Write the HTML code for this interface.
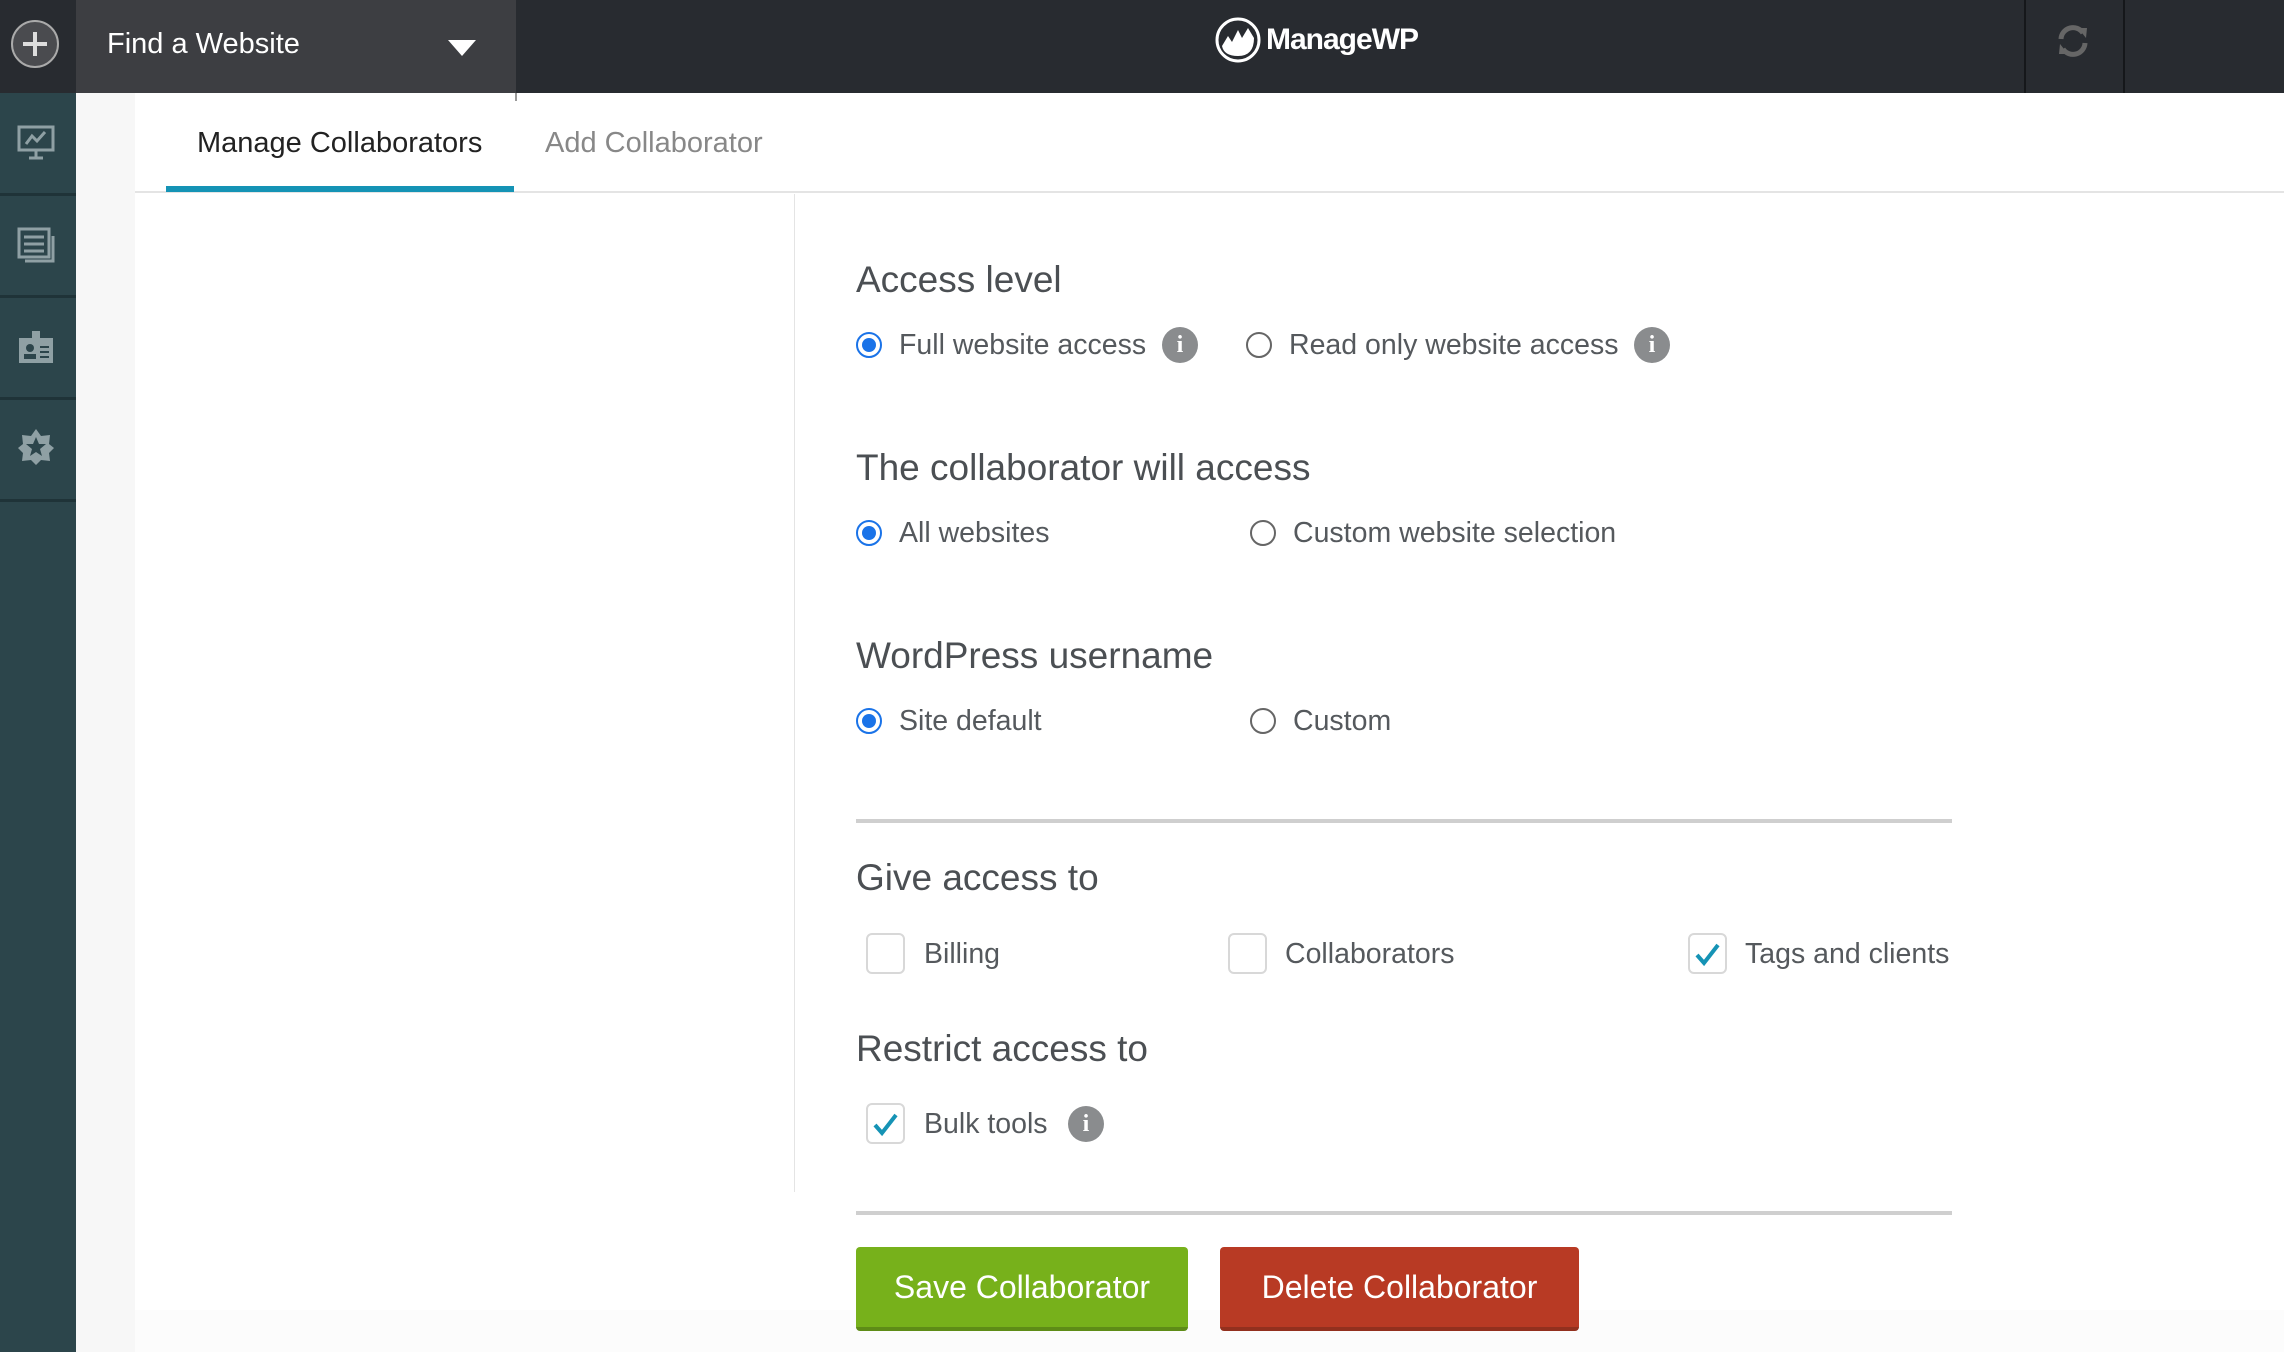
<!DOCTYPE html>
<html><head><meta charset="utf-8"><style>
*{margin:0;padding:0;box-sizing:border-box}
body{width:2284px;height:1352px;position:relative;overflow:hidden;background:#fff;font-family:"Liberation Sans",sans-serif;color:#505458}
.a{position:absolute}
.t{position:absolute;white-space:nowrap}
.h{font-size:37px;color:#4b4f53;line-height:44px}
.l{font-size:28.5px;color:#55595d;line-height:36px}
.radio{position:absolute;width:26px;height:26px;border-radius:50%;border:2px solid #666}
.radio.on{border:2px solid #1a73e8}
.radio.on::after{content:"";position:absolute;left:4px;top:4px;width:14px;height:14px;border-radius:50%;background:#1a73e8}
.info{position:absolute;width:36px;height:36px;border-radius:50%;background:#8a8c8e;color:#fff;font:bold 24px/36px "Liberation Serif",serif;text-align:center}
.cb{position:absolute;width:39px;height:41px;border:2px solid #d8d8d8;border-radius:6px;background:#fff}
.btn{position:absolute;height:84px;border-radius:4px;color:#fff;font-size:32px;line-height:80px;text-align:center}
</style></head><body>
<div class="a" style="left:0;top:0;width:2284px;height:93px;background:#282b30"></div>
<div class="a" style="left:76px;top:0;width:440px;height:93px;background:#3d3e42"></div>
<div class="a" style="left:11px;top:20px;width:48px;height:48px;border-radius:50%;border:2px solid #aaa;background:#4a4b4f"></div>
<div class="a" style="left:33px;top:32px;width:4px;height:24px;background:#ddd"></div>
<div class="a" style="left:23px;top:42px;width:24px;height:4px;background:#ddd"></div>
<div class="t" style="left:107px;top:26px;font-size:29px;line-height:36px;color:#fff">Find a Website</div>
<div class="a" style="left:448px;top:40px;width:0;height:0;border-left:14px solid transparent;border-right:14px solid transparent;border-top:16px solid #fff"></div>
<svg class="a" style="left:1214px;top:16px" width="48" height="48" viewBox="0 0 48 48"><circle cx="24" cy="24" r="21" fill="none" stroke="#fff" stroke-width="3"/><path d="M8 30 L14 20 L18 26 L24 14 L28 22 L34 12 L40 22 Q40 40 24 40 Q10 40 8 30Z" fill="#fff"/></svg>
<div class="t" style="left:1266px;top:22px;font-size:30px;line-height:36px;font-weight:bold;color:#fff;letter-spacing:-1px">ManageWP</div>
<div class="a" style="left:2024px;top:0;width:2px;height:93px;background:#15171a"></div>
<div class="a" style="left:2123px;top:0;width:2px;height:93px;background:#15171a"></div>
<svg class="a" style="left:2054px;top:22px" width="38" height="38" viewBox="0 0 38 38"><path d="M7 17 A12 12 0 0 1 29 11" fill="none" stroke="#666" stroke-width="5"/><path d="M24 6 L33 6 L32 16Z" fill="#666"/><path d="M31 21 A12 12 0 0 1 9 27" fill="none" stroke="#666" stroke-width="5"/><path d="M14 32 L5 32 L6 22Z" fill="#666"/></svg>
<div class="a" style="left:0;top:93px;width:76px;height:1259px;background:#2c454b"></div>
<div class="a" style="left:0;top:193px;width:76px;height:3px;background:#1f3338"></div>
<div class="a" style="left:0;top:295px;width:76px;height:3px;background:#1f3338"></div>
<div class="a" style="left:0;top:397px;width:76px;height:3px;background:#1f3338"></div>
<div class="a" style="left:0;top:499px;width:76px;height:3px;background:#1f3338"></div>
<svg class="a" style="left:17px;top:124px" width="38" height="38" viewBox="0 0 38 38" fill="none" stroke="#8fa0a4" stroke-width="3"><rect x="2" y="3" width="34" height="23"/><path d="M9 20 L15 12 L20 17 L28 8"/><path d="M19 27 V33 M12 34 H26"/></svg>
<svg class="a" style="left:17px;top:226px" width="40" height="38" viewBox="0 0 40 38" fill="none" stroke="#8fa0a4" stroke-width="3"><rect x="2" y="3" width="30" height="28"/><path d="M7 11H27M7 18H27M7 25H27"/><path d="M36 10V35H8"/></svg>
<svg class="a" style="left:18px;top:330px" width="36" height="34" viewBox="0 0 36 34"><rect x="1" y="8" width="34" height="25" fill="#8fa0a4"/><rect x="14" y="1" width="8" height="9" fill="#8fa0a4"/><circle cx="12" cy="18" r="4" fill="#2c454b"/><rect x="6" y="24" width="12" height="5" fill="#2c454b"/><path d="M22 17H31M22 22H31M22 27H31" stroke="#2c454b" stroke-width="2"/></svg>
<svg class="a" style="left:17px;top:428px" width="38" height="38" viewBox="0 0 38 38"><path d="M19 1 L24 8 L33 7 L32 16 L37 20 L32 25 L33 33 L24 32 L19 37 L14 32 L5 33 L6 25 L1 20 L6 16 L5 7 L14 8Z" fill="#8fa0a4"/><path d="M19 9 L22 16 L29 16 L23 21 L25 28 L19 24 L13 28 L15 21 L9 16 L16 16Z" fill="#2c454b"/></svg>
<div class="a" style="left:76px;top:93px;width:59px;height:1259px;background:#f7f7f7"></div>
<div class="a" style="left:515px;top:93px;width:2px;height:8px;background:#999"></div>
<div class="t" style="left:197px;top:125px;font-size:29px;line-height:36px;color:#222">Manage Collaborators</div>
<div class="t" style="left:545px;top:125px;font-size:29px;line-height:36px;color:#888">Add Collaborator</div>
<div class="a" style="left:135px;top:191px;width:2149px;height:2px;background:#e4e4e4"></div>
<div class="a" style="left:166px;top:186px;width:348px;height:6px;background:#1593b5"></div>
<div class="a" style="left:794px;top:194px;width:1px;height:998px;background:#e4e4e4"></div>
<div class="t h" style="left:856px;top:258px">Access level</div>
<div class="radio on" style="left:856px;top:332px"></div>
<div class="t l" style="left:899px;top:327px">Full website access</div>
<div class="info" style="left:1162px;top:327px">i</div>
<div class="radio" style="left:1246px;top:332px"></div>
<div class="t l" style="left:1289px;top:327px">Read only website access</div>
<div class="info" style="left:1634px;top:327px">i</div>
<div class="t h" style="left:856px;top:446px">The collaborator will access</div>
<div class="radio on" style="left:856px;top:520px"></div>
<div class="t l" style="left:899px;top:515px">All websites</div>
<div class="radio" style="left:1250px;top:520px"></div>
<div class="t l" style="left:1293px;top:515px">Custom website selection</div>
<div class="t h" style="left:856px;top:634px">WordPress username</div>
<div class="radio on" style="left:856px;top:708px"></div>
<div class="t l" style="left:899px;top:703px">Site default</div>
<div class="radio" style="left:1250px;top:708px"></div>
<div class="t l" style="left:1293px;top:703px">Custom</div>
<div class="a" style="left:856px;top:819px;width:1096px;height:4px;background:#cfcfcf"></div>
<div class="t h" style="left:856px;top:856px">Give access to</div>
<div class="cb" style="left:866px;top:933px"></div>
<div class="t l" style="left:924px;top:936px">Billing</div>
<div class="cb" style="left:1228px;top:933px"></div>
<div class="t l" style="left:1285px;top:936px">Collaborators</div>
<div class="cb" style="left:1688px;top:933px"></div>
<svg class="a" style="left:1693px;top:940px" width="30" height="28" viewBox="0 0 30 28"><path d="M4 15 L11 23 L25 5" fill="none" stroke="#1593b5" stroke-width="4"/></svg>
<div class="t l" style="left:1745px;top:936px">Tags and clients</div>
<div class="t h" style="left:856px;top:1027px">Restrict access to</div>
<div class="cb" style="left:866px;top:1103px"></div>
<svg class="a" style="left:871px;top:1110px" width="30" height="28" viewBox="0 0 30 28"><path d="M4 15 L11 23 L25 5" fill="none" stroke="#1593b5" stroke-width="4"/></svg>
<div class="t l" style="left:924px;top:1106px">Bulk tools</div>
<div class="info" style="left:1068px;top:1106px">i</div>
<div class="a" style="left:856px;top:1211px;width:1096px;height:4px;background:#cfcfcf"></div>
<div class="a" style="left:135px;top:1310px;width:2149px;height:42px;background:#fcfcfc"></div>
<div class="btn" style="left:856px;top:1247px;width:332px;background:#77b11b;border-bottom:4px solid #5e8c17">Save Collaborator</div>
<div class="btn" style="left:1220px;top:1247px;width:359px;background:#b83a24;border-bottom:4px solid #92301e">Delete Collaborator</div>
</body></html>
